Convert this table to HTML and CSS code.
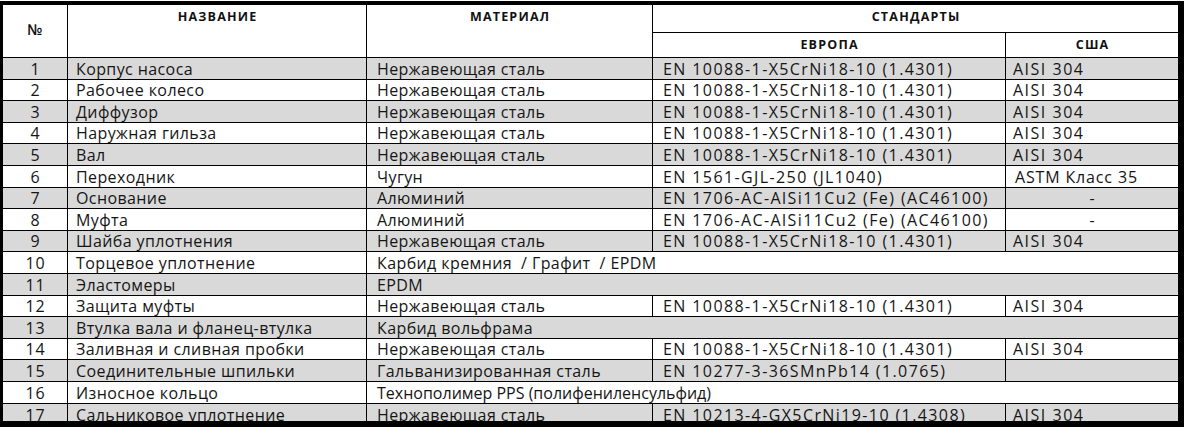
FILE: index.html
```html
<!DOCTYPE html>
<html lang="ru">
<head>
<meta charset="utf-8">
<title>Материалы</title>
<link rel="stylesheet" href="styles.css">
</head>
<body>
<div class="frame">
<table class="spec">
<colgroup>
<col class="c-num"><col class="c-name"><col class="c-mat"><col class="c-eu"><col class="c-us">
</colgroup>
<thead>
<tr class="h1">
<th rowspan="2" class="num-h">№</th>
<th rowspan="2" class="top">НАЗВАНИЕ</th>
<th rowspan="2" class="top">МАТЕРИАЛ</th>
<th colspan="2" class="std last">СТАНДАРТЫ</th>
</tr>
<tr class="h2">
<th>ЕВРОПА</th>
<th class="last">США</th>
</tr>
</thead>
<tbody>
<tr class="g"><td class="n">1</td><td>Корпус насоса</td><td>Нержавеющая сталь</td><td class="eu">EN 10088-1-X5CrNi18-10 (1.4301)</td><td class="us last">AISI 304</td></tr>
<tr><td class="n">2</td><td>Рабочее колесо</td><td>Нержавеющая сталь</td><td class="eu">EN 10088-1-X5CrNi18-10 (1.4301)</td><td class="us last">AISI 304</td></tr>
<tr class="g"><td class="n">3</td><td>Диффузор</td><td>Нержавеющая сталь</td><td class="eu">EN 10088-1-X5CrNi18-10 (1.4301)</td><td class="us last">AISI 304</td></tr>
<tr><td class="n">4</td><td>Наружная гильза</td><td>Нержавеющая сталь</td><td class="eu">EN 10088-1-X5CrNi18-10 (1.4301)</td><td class="us last">AISI 304</td></tr>
<tr class="g"><td class="n">5</td><td>Вал</td><td>Нержавеющая сталь</td><td class="eu">EN 10088-1-X5CrNi18-10 (1.4301)</td><td class="us last">AISI 304</td></tr>
<tr><td class="n">6</td><td>Переходник</td><td>Чугун</td><td class="eu">EN 1561-GJL-250 (JL1040)</td><td class="us astm last">ASTM Класс 35</td></tr>
<tr class="g"><td class="n">7</td><td>Основание</td><td>Алюминий</td><td class="eu">EN 1706-AC-AlSi11Cu2 (Fe) (AC46100)</td><td class="us dash last">-</td></tr>
<tr><td class="n">8</td><td>Муфта</td><td>Алюминий</td><td class="eu">EN 1706-AC-AlSi11Cu2 (Fe) (AC46100)</td><td class="us dash last">-</td></tr>
<tr class="g"><td class="n">9</td><td>Шайба уплотнения</td><td>Нержавеющая сталь</td><td class="eu">EN 10088-1-X5CrNi18-10 (1.4301)</td><td class="us last">AISI 304</td></tr>
<tr><td class="n">10</td><td>Торцевое уплотнение</td><td colspan="3" class="last">Карбид кремния &nbsp;/ Графит &nbsp;/ EPDM</td></tr>
<tr class="g"><td class="n">11</td><td>Эластомеры</td><td colspan="3" class="last">EPDM</td></tr>
<tr><td class="n">12</td><td>Защита муфты</td><td>Нержавеющая сталь</td><td class="eu">EN 10088-1-X5CrNi18-10 (1.4301)</td><td class="us last">AISI 304</td></tr>
<tr class="g"><td class="n">13</td><td>Втулка вала и фланец-втулка</td><td colspan="3" class="last">Карбид вольфрама</td></tr>
<tr><td class="n">14</td><td>Заливная и сливная пробки</td><td>Нержавеющая сталь</td><td class="eu">EN 10088-1-X5CrNi18-10 (1.4301)</td><td class="us last">AISI 304</td></tr>
<tr class="g"><td class="n">15</td><td>Соединительные шпильки</td><td>Гальванизированная сталь</td><td class="eu">EN 10277-3-36SMnPb14 (1.0765)</td><td class="us last"></td></tr>
<tr><td class="n">16</td><td>Износное кольцо</td><td colspan="3" class="last tight">Технополимер PPS (полифениленсульфид)</td></tr>
<tr class="g end"><td class="n">17</td><td>Сальниковое уплотнение</td><td>Нержавеющая сталь</td><td class="eu">EN 10213-4-GX5CrNi19-10 (1.4308)</td><td class="us last">AISI 304</td></tr>
</tbody>
</table>
</div>
</body>
</html>
```
FILE: styles.css
```css
* { box-sizing: border-box; }
html, body { margin: 0; padding: 0; background: #fff; }
body { font-family: "Open Sans", "Noto Sans", sans-serif; color: #151515; }

.frame {
  margin-top: 1px;
  width: 1184px;
  height: 426px;
  border-style: solid;
  border-color: #000;
  border-width: 4px 6px 6px 3px;
  overflow: hidden;
}

.spec {
  width: 1175px;
  table-layout: fixed;
  border-collapse: separate;
  border-spacing: 0;
}
.c-num { width: 65px; }
.c-name { width: 299px; }
.c-mat { width: 286px; }
.c-eu { width: 353px; }
.c-us { width: 172px; }

.spec th, .spec td {
  border-right: 1px solid #000;
  border-bottom: 1px solid #000;
  padding: 0;
  white-space: nowrap;
  overflow: hidden;
}
.spec .last { border-right: none; }

.spec th {
  font-size: 12.5px;
  font-weight: 700;
  letter-spacing: 1.2px;
  text-indent: 1.2px;
  text-align: center;
  color: #111;
}
.h1 { height: 28px; }
.h2 { height: 25px; }
.spec th.top { vertical-align: top; padding-top: 3px; }
.spec th.std { vertical-align: top; padding-top: 3px; }
.spec .h2 th { vertical-align: top; padding-top: 3px; }
.spec th.num-h {
  font-size: 15px;
  font-weight: 600;
  letter-spacing: 0.5px;
  text-indent: 0.5px;
  vertical-align: middle;
  padding-bottom: 4px;
}

.spec td {
  font-size: 16px;
  line-height: 20px;
  height: 21.6px;
  padding-left: 10px;
  letter-spacing: 0.4px;
  vertical-align: bottom;
}
.spec td.n { text-align: center; padding-left: 0; letter-spacing: 0.8px; text-indent: 0.8px; }
.spec td:nth-child(2) { padding-left: 8px; }
.spec td.eu { letter-spacing: 1.4px; }
.spec td.us { padding-left: 7px; letter-spacing: 1.5px; }
.spec td.astm { letter-spacing: 0.85px; padding-left: 9px; }
.spec td.tight { letter-spacing: 0; }
.spec td.dash { text-align: center; padding-left: 0; letter-spacing: 0; }
.spec tr.g td { background: #d9d9d9; }
.spec tr.end td { border-bottom: none; }
```
